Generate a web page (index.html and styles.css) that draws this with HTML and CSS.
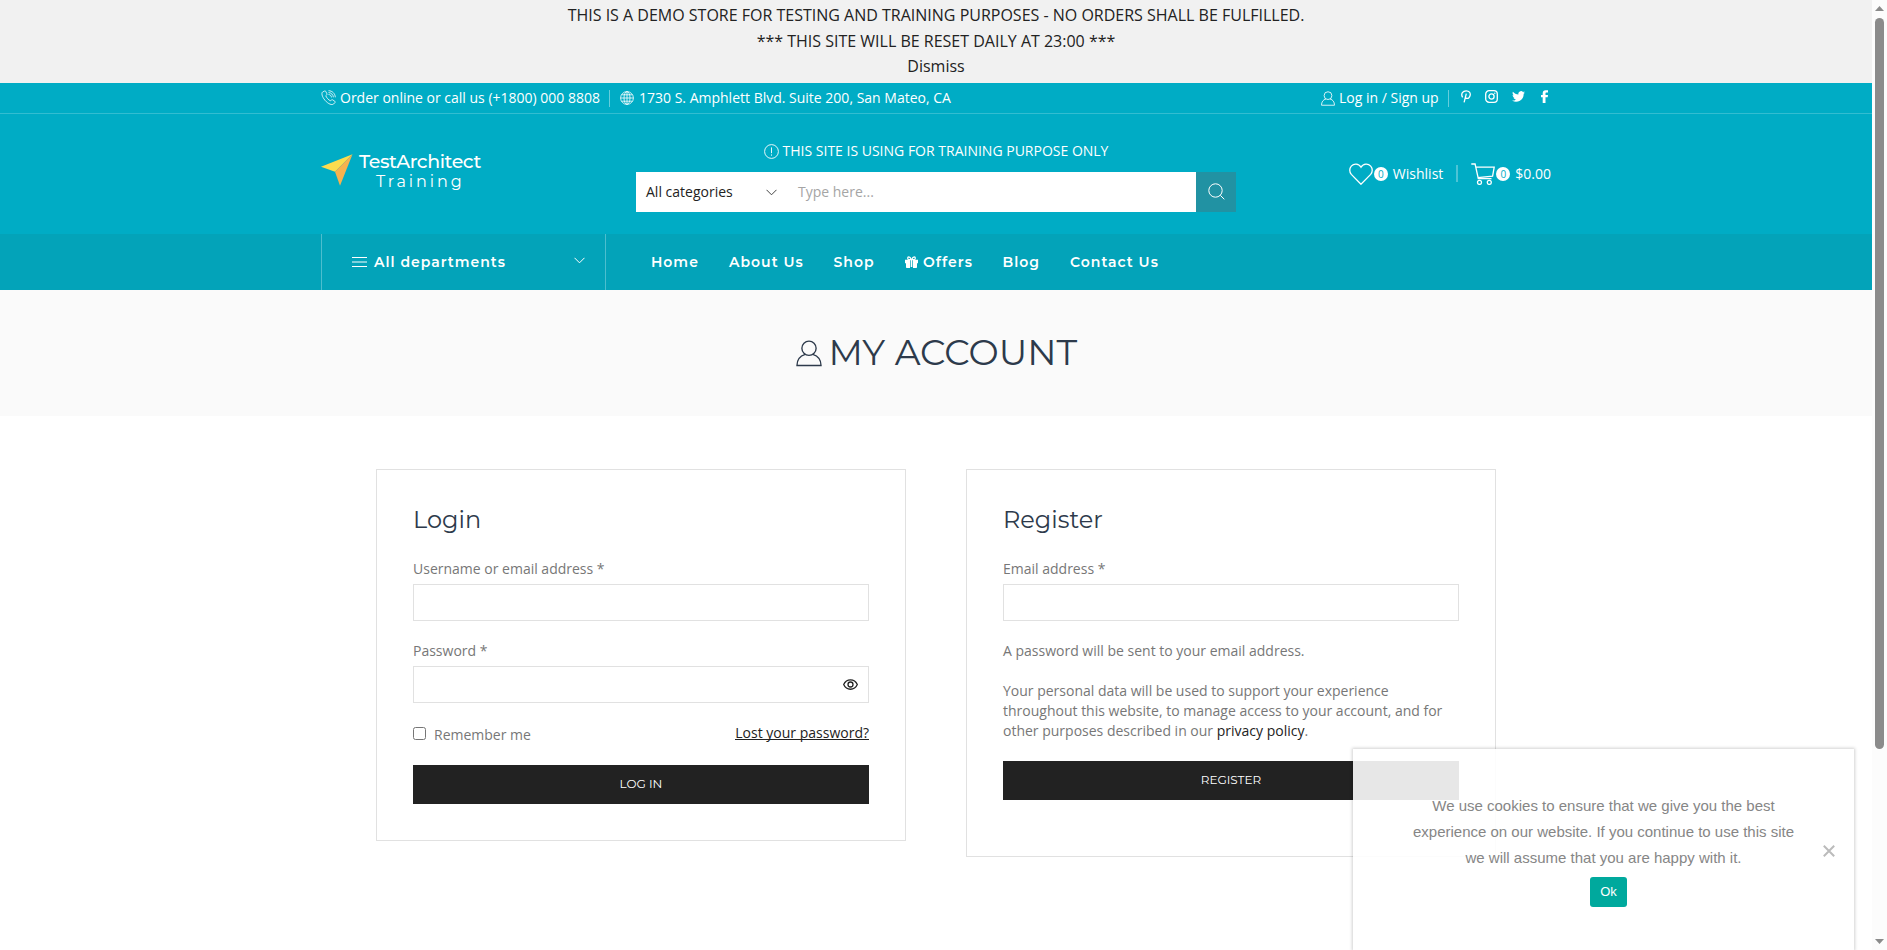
FILE: index.html
```html
<!DOCTYPE html>
<html lang="en">
<head>
<meta charset="utf-8">
<title>My account</title>
<link rel="stylesheet" href="styles.css">
</head>
<body>
<div class="page">
  <div class="notice">
    <div>THIS IS A DEMO STORE FOR TESTING AND TRAINING PURPOSES - NO ORDERS SHALL BE FULFILLED.</div>
    <div>*** THIS SITE WILL BE RESET DAILY AT 23:00 ***</div>
    <div>Dismiss</div>
  </div>

  <header class="header">
    <div class="topbar">
      <div class="container topbar-row">
        <svg class="ic-phone" width="15" height="15" viewBox="0 0 15 15"><path d="M3.6 1 1.6 2C.3 3 .8 6.500 4 10.300 7.500 14.300 11 15.300 12.600 14l1.400-1.500c.4-.5.2-.9-.2-1.200l-2.200-1.500c-.5-.3-.9-.2-1.300.2l-.8.8c-1.800-.6-4.200-3.300-4.700-5.100l.9-.8c.4-.3.4-.7.200-1.100L4.700 1.300c-.3-.4-.7-.5-1.100-.3zM7.500 4.500c1.500 0 2.900 1.200 3 2.900M7.500 2.600c2.600 0 4.700 2 4.900 4.700M7.500.7c3.800 0 6.700 3 6.800 6.600"/></svg>
        <span class="t-phone">Order online or call us (+1800) 000 8808</span>
        <span class="divider d1"></span>
        <svg class="ic-globe" width="14" height="14" viewBox="0 0 14 14"><circle cx="7" cy="7" r="6.400"/><ellipse cx="7" cy="7" rx="3" ry="6.400"/><path d="M7 .6v12.800M.6 7h12.800M1.500 3.800h11M1.500 10.200h11"/></svg>
        <span class="t-addr">1730 S. Amphlett Blvd. Suite 200, San Mateo, CA</span>
        <div class="top-right">
          <svg class="ic-user" width="14" height="15" viewBox="0 0 27 28"><circle cx="13.500" cy="8.500" r="7.500"/><path d="M9.500 14.800C4 16.500 1 20.500 1 27h25c0-6.500-3-10.500-8.500-12.200"/></svg>
          <span class="t-log">Log in / Sign up</span>
          <span class="divider"></span>
          <div class="social">
            <svg width="10" height="13" viewBox="0 0 10 13"><path class="ln" d="M1.600 7.300C-.6 3.600 2 .8 5.200.8c3 0 4.400 2.100 4 4.400-.4 2.500-2.300 3.700-3.800 3.100-1-.4-1-1-.9-1.600M5.300 3.600 3.100 12.400"/></svg>
            <svg width="13" height="13" viewBox="0 0 13 13"><rect class="ln" x=".7" y=".7" width="11.600" height="11.600" rx="3.400"/><circle class="ln" cx="6.500" cy="6.500" r="2.600"/><circle cx="9.800" cy="3.200" r=".7"/></svg>
            <svg width="13" height="11" viewBox="0 0 24 20"><path d="M24 2.400c-.9.400-1.800.7-2.800.8 1-.6 1.800-1.600 2.200-2.700-1 .6-2 1-3.100 1.200A4.900 4.900 0 0 0 11.900 6.200C7.700 6 4.100 4 1.700 1 .4 3.200 1 6.100 3.200 7.600c-.8 0-1.600-.2-2.200-.6-.1 2.300 1.600 4.400 3.900 4.900-.7.200-1.500.2-2.200.1.600 2 2.400 3.400 4.600 3.400A9.900 9.900 0 0 1 0 17.500 14 14 0 0 0 21.500 5c1-.7 1.800-1.600 2.500-2.600z"/></svg>
            <svg class="fb" width="7" height="13" viewBox="0 0 7 13"><path d="M1.700 13V7.200H0V4.900h1.700V3.200C1.700 1.300 2.800.2 4.700.2H7v2.200H5.500c-.8 0-1 .4-1 1v1.500H7l-.3 2.300H4.500V13z"/></svg>
          </div>
        </div>
      </div>
    </div>

    <div class="container main-row">
      <div class="logo">
        <svg width="32" height="32" viewBox="0 0 32 32"><path fill="#fbdc4e" d="M31.500.2 0 12.800l14 5z"/><path fill="#f6b24f" d="M31.500.2 14 17.800 19 31.800z"/></svg>
        <div class="logo-text">
          <span class="logo-a">TestArchitect</span>
          <span class="logo-b">Training</span>
        </div>
      </div>
      <div class="search-col">
        <div class="train">
          <svg width="15" height="15" viewBox="0 0 15 15"><circle cx="7.500" cy="7.500" r="6.900"/><path d="M7.500 3.400v5.800M7.500 10.400v1.300"/></svg>
          <span>THIS SITE IS USING FOR TRAINING PURPOSE ONLY</span>
        </div>
        <div class="search">
          <span class="cat">All categories</span>
          <svg class="chev" width="11" height="7" viewBox="0 0 11 7"><path d="M.5.8l5 5 5-5"/></svg>
          <span class="ph">Type here...</span>
          <span class="search-btn"><svg width="17" height="17" viewBox="0 0 17 17"><circle cx="7.500" cy="7.500" r="6.700"/><path d="M12.300 12.300l4 4"/></svg></span>
        </div>
      </div>
      <div class="actions">
        <svg width="24" height="22" viewBox="0 0 24 22"><path d="M12 21.200 2.300 11.400C.3 9.200.2 5.400 2.300 3.100 4.700.4 9.500.1 12 4.200 14.500.1 19.300.4 21.700 3.100c2.100 2.300 2 6.100 0 8.300z"/></svg>
        <span class="badge">0</span>
        <span class="t-act">Wishlist</span>
        <span class="divider wide"></span>
        <svg width="24" height="22" viewBox="0 0 24 22"><path d="M.3 1h3.800l3.200 14.600h13.200M5 4.200h18.200l-1.600 9L6.900 14.600"/><circle cx="8.500" cy="19.400" r="2"/><circle cx="18.300" cy="19.400" r="2"/></svg>
        <span class="badge">0</span>
        <span class="t-act">$0.00</span>
      </div>
    </div>

    <div class="navbar">
      <div class="container nav-row">
        <div class="dept">
          <svg width="15" height="10" viewBox="0 0 15 10"><path d="M0 .5h15M0 5h15M0 9.500h15"/></svg>
          <span class="w-dept">All departments</span>
          <svg class="dept-chev" width="11" height="7" viewBox="0 0 11 7"><path d="M.5.8l5 5 5-5"/></svg>
        </div>
        <nav class="menu">
          <a class="w-home">Home</a>
          <a class="w-about">About Us</a>
          <a class="w-shop">Shop</a>
          <a class="w-offers"><svg width="13" height="12" viewBox="0 0 13 12"><path d="M0 3.800h5v3.400H0zM8 3.800h5v3.400H8zM1 7.200h4V12H2c-.6 0-1-.4-1-1zM8 7.200h4V11c0 .6-.4 1-1 1H8zM5.700 3.800h1.600V11H5.700z"/><path class="bow" d="M6.500 3.900C5.500 1.500 4.600.9 3.800.9 2.200 1 2.300 3.500 4 3.600h5C10.700 3.500 10.800 1 9.200.9 8.400.9 7.500 1.500 6.500 3.900z"/></svg>Offers</a>
          <a class="w-blog">Blog</a>
          <a class="w-contact">Contact Us</a>
        </nav>
      </div>
    </div>
  </header>

  <section class="title">
    <svg width="26" height="27" viewBox="0 0 27 28"><circle cx="13.500" cy="8.500" r="7.400"/><path d="M9.500 14.800C4 16.500 1 20.500 1 26.500h25c0-6-3-10-8.500-11.700"/></svg>
    <h1>MY ACCOUNT</h1>
  </section>

  <main class="cards">
    <section class="card login">
      <h2 class="h-login">Login</h2>
      <label class="lbl">Username or email address *</label>
      <div class="input"></div>
      <label class="lbl second">Password *</label>
      <div class="input"><svg width="15" height="11" viewBox="0 0 15 11"><path d="M.7 5.500C3.500-.8 11.500-.8 14.300 5.500 11.500 11.800 3.500 11.800.7 5.500z"/><circle cx="7.500" cy="5.500" r="2.500"/></svg></div>
      <div class="remember">
        <input type="checkbox" class="check"><span class="rem">Remember me</span>
        <a class="lost">Lost your password?</a>
      </div>
      <div class="btn b-login"><span>LOG IN</span></div>
    </section>
    <section class="card register">
      <h2 class="h-reg">Register</h2>
      <label class="lbl">Email address *</label>
      <div class="input"></div>
      <p class="sent">A password will be sent to your email address.</p>
      <p class="privacy">Your personal data will be used to support your experience<br>throughout this website, to manage access to your account, and for<br>other purposes described in our <a>privacy policy</a>.</p>
      <div class="btn b-reg"><span>REGISTER</span></div>
    </section>
  </main>
</div>

<div class="scrollbar">
  <svg width="9" height="5" viewBox="0 0 9 5"><path d="M0 5 4.500 0 9 5z"/></svg>
  <div class="thumb"></div>
  <svg class="down" width="9" height="5" viewBox="0 0 9 5"><path d="M0 0h9L4.500 5z"/></svg>
</div>

<aside class="cookie">
  <p>We use cookies to ensure that we give you the best<br>experience on our website. If you continue to use this site<br>we will assume that you are happy with it.</p>
  <span class="ok">Ok</span>
  <svg class="close" width="12" height="12" viewBox="0 0 12 12"><path d="M.8.8l10.400 10.400M11.200.8.800 11.200"/></svg>
</aside>
</body>
</html>
```

FILE: styles.css
```css
* { box-sizing: border-box; }
html, body { margin: 0; height: 950px; overflow: hidden; }
body {
  display: flex;
  position: relative;
  background: #fff;
  font-family: "Open Sans", sans-serif;
  font-size: 14px;
  color: #777;
}
svg { fill: none; stroke: currentColor; flex: none; }
.page { width: 1872px; height: 950px; flex: none; }
.container { width: 1230px; margin: 0 auto; }
span, a { white-space: nowrap; }

.notice {
  height: 83px;
  padding-top: 3px;
  background: #f1f1f1;
  color: #222;
  font-size: 16px;
  line-height: 25.600px;
  text-align: center;
}

.header { background: #00acc5; color: #fff; }
.topbar { height: 31px; border-bottom: 1px solid #33bdd1; }
.topbar-row { display: flex; align-items: center; height: 30px; }
.topbar-row > svg { margin-top: -1px; stroke-width: .8; }
.ic-user { margin-top: 1px; stroke-width: 1.600; }
.t-phone, .t-addr, .t-log { margin-top: -2px; }
.t-phone { width: 261px; margin-left: 4px; }
.t-addr { margin-left: 5px; }
.divider { width: 1px; height: 17px; background: #66cddc; }
.d1 { margin: 0 10px 0 8px; }
.top-right { display: flex; align-items: center; margin-left: auto; }
.t-log { width: 100px; margin-left: 4px; margin-right: 9px; }
.social { display: flex; align-items: center; gap: 14px; margin: -4px 3px 0 12px; }
.social svg { fill: #fff; stroke: none; }
.social .ln { fill: none; stroke: #fff; stroke-width: 1.300; }
.social .fb { margin-left: 2px; }

.main-row { display: flex; height: 120px; }
.logo { display: flex; width: 315px; padding-top: 40px; }
.logo svg { stroke: none; }
.logo-text { display: flex; flex-direction: column; margin-left: 6px; font-family: Montserrat, Lato, sans-serif; }
.logo-a { font-size: 19px; line-height: 20px; letter-spacing: -.4px; margin-top: -2px; font-weight: 500; }
.logo-b { font-size: 16px; line-height: 19px; letter-spacing: 2.900px; margin-left: 17px; }
.search-col { width: 600px; }
.train { display: flex; justify-content: center; align-items: center; gap: 4px; height: 20px; margin-top: 27px; }
.train svg { stroke-width: .9; }
.train span { margin-top: -2px; }
.search { display: flex; align-items: center; height: 40px; margin-top: 11px; padding-left: 10px; background: #fff; color: #222; }
.cat { width: 120px; margin-top: -2px; }
.chev { stroke: #444; }
.ph { margin: -2px 0 0 21px; color: #a5a5a5; }
.search-btn { display: flex; align-items: center; justify-content: center; width: 40px; height: 40px; margin-left: auto; background: #2192a3; color: #fff; }
.search-btn svg { margin-top: -2px; }
.actions { display: flex; align-items: center; height: 22px; margin: 49px 0 0 auto; }
.actions svg { stroke-width: 1.300; }
.badge { width: 14px; height: 14px; margin: -1px 5px 0 1px; border-radius: 50%; background: #fff; color: #00acc5; font-size: 10px; line-height: 14px; text-align: center; }
.t-act { margin-top: -2px; }
.wide { width: 2px; margin: -1px 13px 0 13px; background: #4dc4d6; }

.navbar { height: 56px; background: #03a3b9; font-family: Montserrat, Inter, sans-serif; font-weight: 600; font-size: 14px; letter-spacing: 1px; }
.nav-row { display: flex; height: 56px; }
.dept { display: flex; align-items: center; width: 285px; padding: 0 20px 0 30px; border: solid #4dbece; border-width: 0 1px; }
.dept > span { margin-left: 7px; }
.dept-chev { margin: -3px 0 0 auto; }
.menu { display: flex; align-items: center; padding-left: 45px; }
.menu a { display: block; }
.menu svg { margin: 0 5px -1px 1px; fill: #fff; stroke: none; }
.menu .bow { fill: none; stroke: #fff; stroke-width: 1.200; }
.w-home { width: 78px; }
.w-about { width: 104.500px; }
.w-shop { width: 70.500px; }
.w-offers { width: 98.500px; }
.w-blog { width: 67.500px; }

.title { display: flex; justify-content: center; height: 126px; padding-top: 50px; background: #fafafa; color: #2d3a4b; }
.title svg { stroke-width: 1.400; }
.title h1 { margin: -10px 0 0 7px; font: 400 36px/44px Montserrat, Lato, sans-serif; width: 248px; white-space: nowrap; }

.cards { display: flex; gap: 60px; align-items: flex-start; padding: 53px 0 0 376px; }
.card { width: 530px; padding: 36px; border: 1px solid #e1e1e1; }
.login { height: 372px; }
.register { height: 388px; }
.card h2 { margin: -1px 0 0; color: #2d3a4b; font: 400 24px/30px Montserrat, Lato, sans-serif; }
.lbl { display: block; margin-top: 24px; line-height: 20px; }
.lbl.second { margin-top: 20px; }
.input { display: flex; align-items: center; justify-content: flex-end; height: 37px; margin-top: 5px; padding-right: 10px; border: 1px solid #e1e1e1; color: #222; }
.input svg { stroke-width: 1.300; margin-top: -1px; }
.remember { display: flex; height: 20px; margin-top: 20px; line-height: 20px; }
.check { width: 13px; height: 13px; margin: 4px 8px 0 0; }
.rem { margin-top: 2px; }
.lost { height: 17px; margin-left: auto; border-bottom: 1px solid #222; color: #222; }
.btn { display: flex; align-items: center; justify-content: center; height: 39px; padding-bottom: 2px; background: #222; color: #fff; font: 400 12px/20px Montserrat, Lato, sans-serif; }
.b-login { margin-top: 22px; }
.sent { margin: 20px 0 0; line-height: 20px; }
.privacy { margin: 20px 0 0; line-height: 20px; white-space: nowrap; }
.privacy a { color: #222; }
.b-reg { margin-top: 20px; }

.scrollbar { width: 15px; height: 950px; flex: none; display: flex; flex-direction: column; align-items: center; padding: 6px 0; background: #fcfcfc; }
.scrollbar svg { fill: #8b8b8b; stroke: none; }
.thumb { width: 9px; height: 731px; margin-top: 7px; border-radius: 5px; background: #8b8b8b; }
.down { margin-top: auto; }

.cookie {
  position: absolute;
  left: 1353px;
  top: 749px;
  width: 501px;
  height: 201px;
  padding-top: 44px;
  background: rgba(255, 255, 255, .895);
  box-shadow: 0 0 3px 1px rgba(0, 0, 0, .18);
  color: #868686;
  font: 15px/26px "Liberation Sans", Arial, sans-serif;
  text-align: center;
}
.cookie p { margin: 0; }
.ok { display: block; width: 37px; height: 30px; margin: 6px 0 0 237px; border-radius: 3px; background: #00a99d; color: #fff; font-size: 13px; line-height: 30px; }
.close { position: absolute; left: 470px; top: 96px; stroke: #bbb; stroke-width: 2; }
```
